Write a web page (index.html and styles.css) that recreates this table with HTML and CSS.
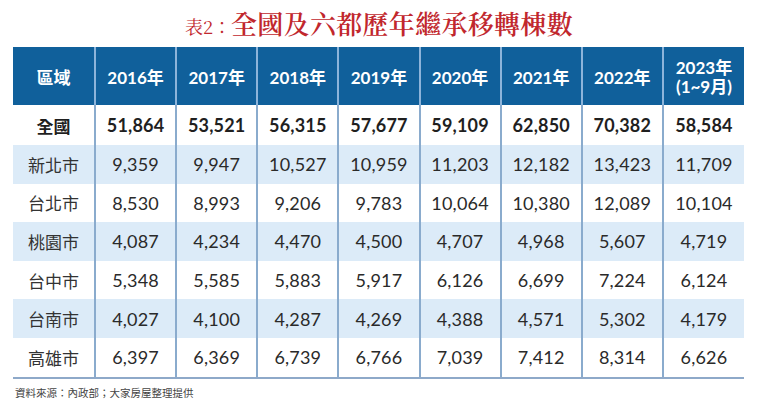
FILE: index.html
```html
<!DOCTYPE html>
<html lang="zh-Hant">
<head>
<meta charset="utf-8">
<title>表2：全國及六都歷年繼承移轉棟數</title>
<link rel="stylesheet" href="styles.css">
</head>
<body>
<div class="page">
  <h1 class="title"><span class="title-label">表2：</span><span class="title-main">全國及六都歷年繼承移轉棟數</span></h1>
  <table class="data">
    <thead>
      <tr>
        <th class="col-area">區域</th>
        <th>2016年</th>
        <th>2017年</th>
        <th>2018年</th>
        <th>2019年</th>
        <th>2020年</th>
        <th>2021年</th>
        <th>2022年</th>
        <th class="two-line">2023年<br>(1~9月)</th>
      </tr>
    </thead>
    <tbody>
      <tr class="total">
        <td class="area">全國</td>
        <td>51,864</td><td>53,521</td><td>56,315</td><td>57,677</td><td>59,109</td><td>62,850</td><td>70,382</td><td>58,584</td>
      </tr>
      <tr class="alt">
        <td class="area">新北市</td>
        <td>9,359</td><td>9,947</td><td>10,527</td><td>10,959</td><td>11,203</td><td>12,182</td><td>13,423</td><td>11,709</td>
      </tr>
      <tr>
        <td class="area">台北市</td>
        <td>8,530</td><td>8,993</td><td>9,206</td><td>9,783</td><td>10,064</td><td>10,380</td><td>12,089</td><td>10,104</td>
      </tr>
      <tr class="alt">
        <td class="area">桃園市</td>
        <td>4,087</td><td>4,234</td><td>4,470</td><td>4,500</td><td>4,707</td><td>4,968</td><td>5,607</td><td>4,719</td>
      </tr>
      <tr>
        <td class="area">台中市</td>
        <td>5,348</td><td>5,585</td><td>5,883</td><td>5,917</td><td>6,126</td><td>6,699</td><td>7,224</td><td>6,124</td>
      </tr>
      <tr class="alt">
        <td class="area">台南市</td>
        <td>4,027</td><td>4,100</td><td>4,287</td><td>4,269</td><td>4,388</td><td>4,571</td><td>5,302</td><td>4,179</td>
      </tr>
      <tr class="last">
        <td class="area">高雄市</td>
        <td>6,397</td><td>6,369</td><td>6,739</td><td>6,766</td><td>7,039</td><td>7,412</td><td>8,314</td><td>6,626</td>
      </tr>
    </tbody>
  </table>
  <p class="source">資料來源：內政部；大家房屋整理提供</p>
</div>
</body>
</html>
```

FILE: styles.css
```css
html, body {
  margin: 0;
  padding: 0;
  background: #ffffff;
}

.page {
  width: 758px;
  height: 402px;
  overflow: hidden;
  font-family: "Noto Sans CJK TC", "Noto Sans", sans-serif;
}

.title {
  margin: 0;
  height: 47px;
  box-sizing: border-box;
  padding: 5px 0 0 0;
  display: flex;
  justify-content: center;
  align-items: baseline;
  color: #c1272d;
  font-family: "Noto Serif CJK TC", "Liberation Serif", "Noto Sans CJK TC", serif;
  font-weight: 600;
  white-space: nowrap;
}

.title-label {
  font-size: 18px;
  font-weight: 400;
}

.title-main {
  font-size: 26px;
  line-height: 36px;
  letter-spacing: 0.3px;
}

.data {
  width: 731px;
  margin-left: 13px;
  border-collapse: collapse;
  table-layout: fixed;
}

.data th {
  background: #10609b;
  color: #ffffff;
  font-family: "Lato", "Noto Sans CJK TC", sans-serif;
  font-weight: 700;
  font-size: 17px;
  height: 58px;
  padding: 0;
  text-align: center;
  border-left: 2px solid #8db4da;
  box-sizing: border-box;
}

.data th.col-area {
  width: 82px;
  border-left: none;
  font-family: "Noto Sans CJK TC", sans-serif;
}

.data th.two-line {
  line-height: 19px;
  padding-top: 2px;
}

.data td {
  padding: 0;
  height: 38.6px;
  text-align: center;
  font-family: "Lato", "Noto Sans CJK TC", sans-serif;
  font-size: 18px;
  color: #2a2a2a;
  border-left: 2px solid #8aabcd;
  letter-spacing: 0.2px;
}

.data td.area {
  border-left: none;
  font-family: "Noto Sans CJK TC", sans-serif;
  font-size: 17px;
  letter-spacing: 0;
  color: #333333;
}

.data tr.total td {
  height: 40px;
  font-weight: 700;
  color: #1f1f1f;
}

.data tr.alt td {
  background: #dcebf8;
}

.data tr.last td {
  border-bottom: 2px solid #8ea9c9;
}

.source {
  margin: 6px 0 0 15px;
  font-size: 10.5px;
  line-height: 16px;
  color: #444444;
  font-family: "Noto Sans CJK TC", sans-serif;
}
```
